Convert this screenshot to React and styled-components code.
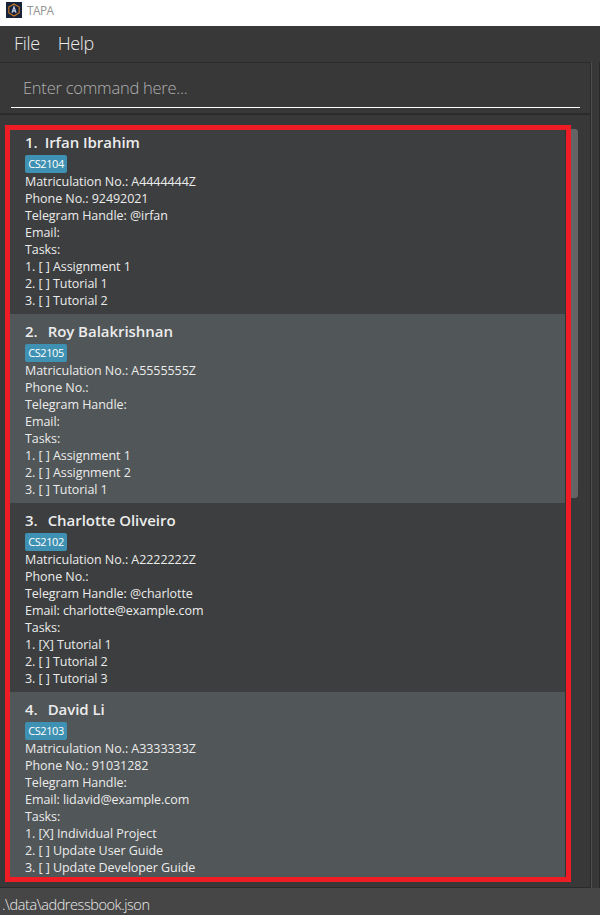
import React from "react";
import styled, { createGlobalStyle } from "styled-components";

const GlobalStyle = createGlobalStyle`
  * { box-sizing: border-box; }
  body { margin: 0; background: #383838; overflow: hidden; }
`;

const Window = styled.div`
  width: 600px;
  height: 915px;
  display: flex;
  flex-direction: column;
  background: #383838;
  color: #ececec;
  font-family: "Open Sans", "Noto Sans", sans-serif;
  white-space: pre;
`;

const TitleBar = styled.header`
  height: 26px;
  padding: 2px 0 0 6px;
  display: flex;
  align-items: flex-start;
  gap: 5px;
  background: #fff;
  color: #949494;
  font-size: 11.8px;
  line-height: 17px;
  letter-spacing: -0.5px;
`;

const MenuBar = styled.nav`
  height: 36px;
  display: flex;
  align-items: center;
  gap: 18px;
  padding-left: 14px;
  font-size: 18px;
  font-weight: 300;
  line-height: 34px;
  letter-spacing: -0.35px;

  span { height: 36px; }
`;

const Body = styled.main`
  height: 826px;
  display: flex;
  justify-content: space-between;
`;

const Panel = styled.div`
  width: 592px;
  display: flex;
  flex-direction: column;
  border-right: 1px solid #4f4f4f;
`;

const EdgeLine = styled.div`
  width: 1px;
  background: #282828;
`;

const CommandPane = styled.section`
  height: 53px;
  padding: 8px 10px 0 11px;
  border: solid #2b2b2b;
  border-width: 1px 1px 2px 0;
`;

const CommandInput = styled.div`
  height: 37px;
  padding-left: 12px;
  border-bottom: 1px solid #fff;
  color: #b0b0b0;
  font-size: 16.5px;
  font-weight: 300;
  line-height: 34px;
  letter-spacing: -0.24px;
`;

const ListPane = styled.section`
  position: relative;
  flex: 1;
  display: flex;
  padding: 10px 0 0 10px;
  border: solid #2b2b2b;
  border-width: 0 1px 1px 0;
`;

const PersonList = styled.div`
  width: 556px;
  height: 756px;
  border-right: 1px solid #333;
`;

const Scrollbar = styled.div`
  width: 12px;
  height: 369px;
  margin-top: 4px;
  border-radius: 3px;
  background: #646464;
`;

const Highlight = styled.div`
  position: absolute;
  inset: 10px auto auto 5px;
  width: 566px;
  height: 757px;
  border: 5px solid #ee1c25;
`;

const Card = styled.article`
  height: 189px;
  padding: 6px 15px 0;
  background: ${(p) => (p.$alternate ? "#515658" : "#3c3e3f")};
`;

const Name = styled.h2`
  display: flex;
  gap: ${(p) => p.$gap}px;
  margin: 0;
  height: 24px;
  font-size: 15px;
  font-weight: 600;
  line-height: 23px;
  letter-spacing: -0.04px;
`;

const Tag = styled.div`
  width: 42px;
  height: 18px;
  border-radius: 2px;
  background: #3e91b2;
  color: #fff;
  font-size: 11px;
  line-height: 18px;
  text-align: center;
  letter-spacing: -0.4px;
`;

const Detail = styled.div`
  height: 17px;
  font-size: 12.5px;
  line-height: 17px;
  letter-spacing: -0.06px;
`;

const StatusBar = styled.footer`
  height: 27px;
  padding-left: 2px;
  background: #464646;
  font-size: 14.5px;
  font-weight: 300;
  line-height: 34px;
  letter-spacing: -0.43px;
`;

const people = [
  { name: "Irfan Ibrahim", tag: "CS2104", id: "A4444444Z", phone: "92492021", handle: "@irfan", email: "", tasks: ["[ ] Assignment 1", "[ ] Tutorial 1", "[ ] Tutorial 2"] },
  { name: "Roy Balakrishnan", tag: "CS2105", id: "A5555555Z", phone: "", handle: "", email: "", tasks: ["[ ] Assignment 1", "[ ] Assignment 2", "[ ] Tutorial 1"] },
  { name: "Charlotte Oliveiro", tag: "CS2102", id: "A2222222Z", phone: "", handle: "@charlotte", email: "charlotte@example.com", tasks: ["[X] Tutorial 1", "[ ] Tutorial 2", "[ ] Tutorial 3"] },
  { name: "David Li", tag: "CS2103", id: "A3333333Z", phone: "91031282", handle: "", email: "lidavid@example.com", tasks: ["[X] Individual Project", "[ ] Update User Guide", "[ ] Update Developer Guide"] },
];

function Logo() {
  return (
    <svg width="16" height="16" viewBox="0 0 16 16">
      <rect width="16" height="16" fill="#17233b" />
      <path d="M8 2 13.2 5v6L8 14 2.8 11V5Z" fill="none" stroke="#c87822" strokeWidth="1.1" />
      <path d="M6 10.7 8 5l2 5.7M6.6 9h2.8" fill="none" stroke="#bdc9dc" strokeWidth="1.3" />
    </svg>
  );
}

function PersonCard({ person, index }) {
  return (
    <Card $alternate={index % 2 === 1}>
      <Name $gap={index === 0 ? 7 : 10}>
        <span>{index + 1}.</span>
        <span>{person.name}</span>
      </Name>
      <Tag>{person.tag}</Tag>
      <Detail>Matriculation No.: {person.id}</Detail>
      <Detail>Phone No.: {person.phone}</Detail>
      <Detail>Telegram Handle: {person.handle}</Detail>
      <Detail>Email: {person.email}</Detail>
      <Detail>Tasks:</Detail>
      {person.tasks.map((task, i) => (
        <Detail key={i}>{i + 1}. {task}</Detail>
      ))}
    </Card>
  );
}

export default function App() {
  return (
    <Window>
      <GlobalStyle />
      <TitleBar><Logo /><span>TAPA</span></TitleBar>
      <MenuBar><span>File</span><span>Help</span></MenuBar>
      <Body>
        <Panel>
          <CommandPane><CommandInput>Enter command here...</CommandInput></CommandPane>
          <ListPane>
            <PersonList>
              {people.map((person, i) => <PersonCard key={person.id} person={person} index={i} />)}
            </PersonList>
            <Scrollbar />
            <Highlight />
          </ListPane>
        </Panel>
        <EdgeLine />
      </Body>
      <StatusBar>.\data\addressbook.json</StatusBar>
    </Window>
  );
}
